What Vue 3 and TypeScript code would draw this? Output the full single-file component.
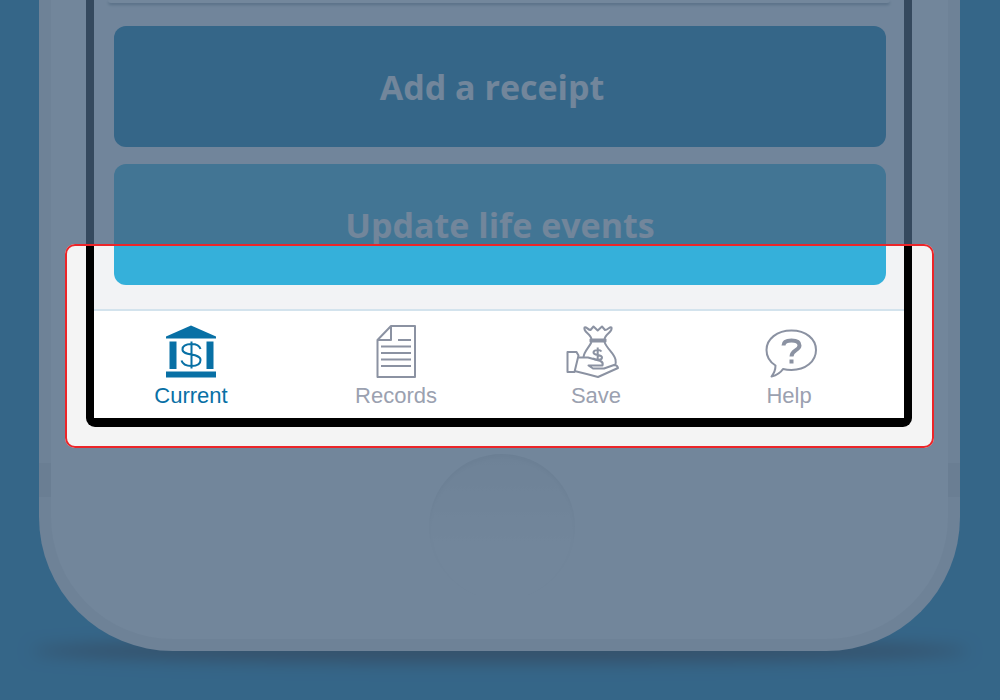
<script setup lang="ts">
import { ref } from 'vue'

type TabId = 'current' | 'records' | 'save' | 'help'

interface Tab {
  id: TabId
  label: string
}

const tabs: Tab[] = [
  { id: 'current', label: 'Current' },
  { id: 'records', label: 'Records' },
  { id: 'save', label: 'Save' },
  { id: 'help', label: 'Help' },
]

const active = ref<TabId>('current')
</script>

<template>
  <main class="page">
    <section class="phone">
      <div class="screen">
        <div class="card"></div>
        <div class="actions">
          <button type="button" class="action receipt">Add a receipt</button>
          <button type="button" class="action events">Update life events</button>
        </div>
        <nav class="tabs" aria-label="Sections">
          <button
            v-for="tab in tabs"
            :key="tab.id"
            type="button"
            class="tab"
            :class="{ active: tab.id === active }"
            @click="active = tab.id"
          >
            <svg v-if="tab.id === 'current'" class="icon" viewBox="0 0 56 56" aria-hidden="true">
              <g fill="currentColor">
                <path d="M28 2.5 53 13.5V15.5H3V13.5Z" />
                <path d="M6.500 18.500H13.500V46H6.500ZM43.500 18.500H50.500V46H43.500ZM3 48.500H53V54.500H3Z" />
              </g>
              <path class="coin" d="M37.500 26C36.500 22.500 33 21 28.500 21C23 21 19.500 23 19.500 26.500C19.500 33.500 37.500 29.500 37.500 37C37.500 41 34 43 28.500 43C23 43 19.500 41 18.500 37.500M28.500 18.500V45.500" />
            </svg>
            <svg v-else-if="tab.id === 'records'" class="icon line" viewBox="0 0 56 56" aria-hidden="true">
              <path d="M23 3H47V54H9.500V17ZM23 3V17H9.500" />
              <path d="M30 17H43M13 23.500H43M13 30H43M13 36.500H43M13 43H43" />
            </svg>
            <svg v-else-if="tab.id === 'save'" class="icon line" viewBox="0 0 56 56" aria-hidden="true">
              <path d="M23.500 16.500C23 11 15 9 16.500 4.500C18 3 20 7 22.500 7L25.500 3.500L29.700 7.500L34 3.500L37 7C40 7 42 3 43.500 4.500C45 9 37 11 36.500 16.500" />
              <path d="M22.500 16.500H37.500V18.500H22.500Z" />
              <path d="M23.500 19C21 25 16 28 15.500 34.500M36.500 19C39 26 46 30 47.500 36.500Q48.200 40 47 42" />
              <path d="M-.5 29H8.500L10.500 32.500L6.500 49H-.5Z" />
              <path d="M10.500 34.500H20L32.500 38Q35.500 39.500 34.500 42.500H20.500L25 45.500H36L46 42Q49.500 42 50 45L30 54Q19 51 6.500 48" />
              <path d="M33.500 28.500C32 26.500 25.500 26.500 25.500 29.500C25.500 33 34 31 34 34.500C34 37.500 27 37.500 25 35M29.700 24.500V38" />
            </svg>
            <svg v-else class="icon line" viewBox="0 0 56 56" aria-hidden="true">
              <path d="M14.500 42.500C8 38.500 5.500 33 5.500 27C5.500 16 16 7.500 30.500 7.500C45 7.500 55 16 55 27C55 38.500 44.500 47 30.500 47Q26 47 22 46Q18.500 51.500 10.500 53.500Q14.500 48.500 14.500 42.500Z" />
              <path class="question" d="M22.500 22.500C22.500 18.500 26 17.500 30.500 17.500C35.500 17.500 38.500 19 38.500 22.500C38.500 27.500 30.500 27 30.500 33.500M30.500 36.500V40.500" />
            </svg>
            <span>{{ tab.label }}</span>
          </button>
        </nav>
      </div>
      <button type="button" class="home" aria-label="Home"></button>
    </section>
    <div class="spotlight"></div>
  </main>
</template>

<style>
body {
  margin: 0;
}
</style>

<style scoped>
.page {
  position: relative;
  box-sizing: border-box;
  min-height: 100vh;
  padding: 0 40px 49px 39px;
  overflow: hidden;
  background: #0074aa;
  isolation: isolate;
}

.page::before {
  content: '';
  position: absolute;
  z-index: -1;
  right: 32px;
  bottom: 37px;
  left: 32px;
  height: 24px;
  border-radius: 50%;
  background: rgba(0, 25, 40, 0.9);
  filter: blur(8px);
}

.phone {
  position: relative;
  display: flex;
  flex-direction: column;
  align-items: center;
  padding: 0 36px 39px 35px;
  border: 12px solid #e5e5e5;
  border-top: 0;
  border-radius: 0 0 134px 134px;
  background: #f4f4f4;
}

.phone::before,
.phone::after {
  content: '';
  position: absolute;
  bottom: 142px;
  width: 12px;
  height: 34px;
  background: #d6d6d6;
}

.phone::before {
  left: -12px;
}

.phone::after {
  right: -12px;
}

.screen {
  box-sizing: border-box;
  width: 100%;
  overflow: hidden;
  border: solid #000;
  border-width: 0 8px 9px;
  border-radius: 0 0 9px 9px;
  background: #f2f3f5;
}

.card {
  height: 3px;
  margin: 0 14px;
  border-radius: 0 0 10px 10px;
  background: #f8f8f8;
  box-shadow: 0 2px 3px #8a95a0;
}

.actions {
  display: flex;
  flex-direction: column;
  gap: 17px;
  padding: 23px 18px 24px 20px;
}

.action {
  height: 121px;
  padding: 0;
  border: 0;
  border-radius: 12px;
  color: #f4f4f4;
  font: 700 34px/44px 'Open Sans', sans-serif;
}

.receipt {
  padding-right: 16px;
  background: #0074aa;
}

.events {
  background: #35b0da;
}

.tabs {
  display: grid;
  grid-template-columns: 194fr 216fr 184fr 202fr;
  padding: 12px 14px 10px 0;
  border-top: 2px solid #d3e3ed;
  background: #fff;
}

.tab {
  display: flex;
  flex-direction: column;
  align-items: center;
  gap: 5px;
  padding: 0;
  border: 0;
  background: none;
  color: #9ba1b0;
  font: 22px/24px 'Liberation Sans', Arial, sans-serif;
}

.tab.active {
  color: #0870a5;
}

.icon {
  width: 56px;
  height: 56px;
  overflow: visible;
}

.line,
.coin {
  fill: none;
  stroke: currentColor;
  stroke-width: 2;
  stroke-linejoin: round;
}

.line {
  color: #8b92a2;
}

.question {
  stroke-width: 4;
}

.home {
  box-sizing: border-box;
  width: 146px;
  height: 146px;
  margin: 27px 0 0 6px;
  padding: 0;
  border: 0;
  border-radius: 50%;
  background: linear-gradient(#e6e6e6, #f4f4f4 60%);
  box-shadow: inset 0 3px 4px rgba(0, 0, 0, 0.06);
}

.spotlight {
  position: absolute;
  top: 244px;
  right: 66px;
  left: 65px;
  box-sizing: border-box;
  height: 204px;
  border: 2px solid #ec2529;
  border-radius: 10px;
  box-shadow: 0 0 0 2000px rgba(70, 97, 125, 0.754);
  pointer-events: none;
}
</style>
